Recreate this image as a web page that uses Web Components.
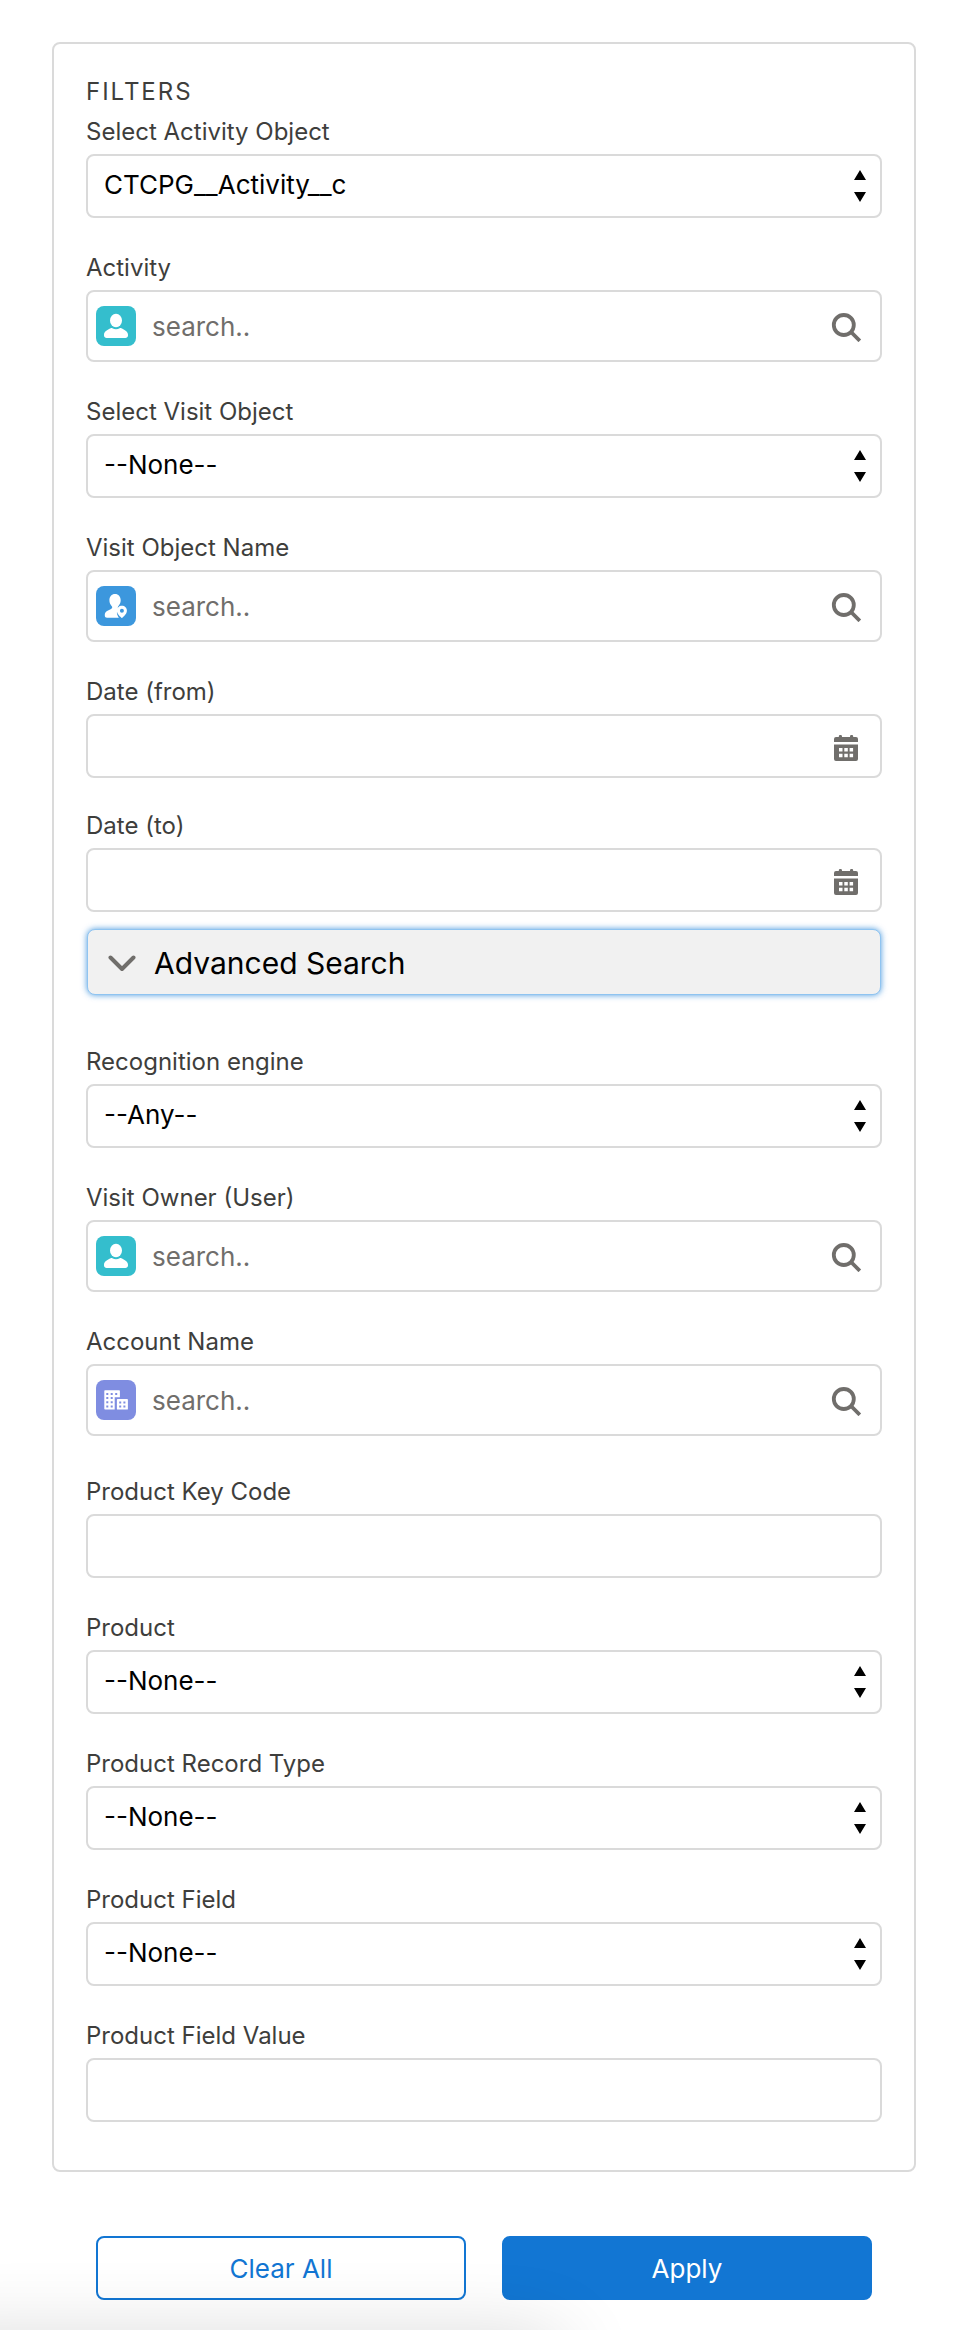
<!DOCTYPE html>
<html lang="en">
<head>
<meta charset="utf-8">
<meta name="viewport" content="width=device-width, initial-scale=1">
<title>Filters</title>
<style>
  body { margin: 0; background: #fff; color: #3e3e3c; font-family: Inter, "Liberation Sans", sans-serif; font-size: 24px; }
</style>
</head>
<body>
<filter-page>
  <filter-card heading="Filters">
    <field-stack>
      <select-field label="Select Activity Object"><option>CTCPG__Activity__c</option></select-field>
      <lookup-field label="Activity" icon="user"></lookup-field>
      <select-field label="Select Visit Object"><option>--None--</option></select-field>
      <lookup-field label="Visit Object Name" icon="visit"></lookup-field>
      <field-stack dense>
        <text-field label="Date (from)" calendar></text-field>
        <text-field label="Date (to)" calendar></text-field>
      </field-stack>
    </field-stack>
    <expand-section heading="Advanced Search">
      <field-stack>
        <select-field label="Recognition engine"><option>--Any--</option></select-field>
        <lookup-field label="Visit Owner (User)" icon="user"></lookup-field>
        <lookup-field label="Account Name" icon="account"></lookup-field>
        <field-stack separated>
          <text-field label="Product Key Code"></text-field>
          <select-field label="Product"><option>--None--</option></select-field>
          <select-field label="Product Record Type"><option>--None--</option></select-field>
          <select-field label="Product Field"><option>--None--</option></select-field>
          <text-field label="Product Field Value"></text-field>
        </field-stack>
      </field-stack>
    </expand-section>
  </filter-card>
  <action-button slot="actions">Clear All</action-button>
  <action-button slot="actions" variant="brand">Apply</action-button>
</filter-page>

<script>
const FIELD_CSS = `
  *, *::before, *::after { box-sizing: border-box; }
  :host { display: block; }
  label { display: block; line-height: 36px; padding-bottom: 4px; font-size: 24px; color: #3e3e3c; }
  .box { display: flex; align-items: center; height: 64px; border: 2px solid #dadada; border-radius: 8px; background: #fff; }
  input, select { flex: 1; min-width: 0; width: 100%; height: 100%; margin: 0; border: 0; outline: 0; background: transparent; font: inherit; font-size: 26px; color: #000; }
  svg { display: block; flex: none; }
`;

const TILES = {
  user: `<rect width="40" height="40" rx="8" fill="#34becd"/>
    <ellipse cx="20" cy="14.5" rx="6" ry="6.8" fill="#fff"/>
    <path fill="#fff" d="M32 28.8v.7c0 1.500-1.200 2.500-2.600 2.500H10.600C9.200 32 8 31 8 29.500v-.7c0-3.200 3.800-5.200 7.300-6.700.4-.1.700-.1 1 .1 2.400 1.500 5 1.500 7.400 0 .3-.2.600-.2 1-.1 3.500 1.500 7.300 3.500 7.300 6.700z"/>`,
  visit: `<rect width="40" height="40" rx="8" fill="#3c97dd"/>
    <path fill="#fff" d="M19 8c3.400 0 5.700 2.700 5.700 6.300 0 2.400-1 4.300-2.300 5.700-.9 1-.7 2.300 0 2.900-1.500 1.700-1.800 3.700-1.200 5.600.4 1.200 1 2.200 1.700 3.200H11c-1.300 0-2.200-.8-2.200-2v-.9c0-3 3.100-4.400 5.800-5.500 1.900-.8 2-2.300 1-3.300-1.300-1.400-2.200-3.300-2.200-5.700C13.400 10.700 15.700 8 19 8z"/>
    <path fill="#fff" fill-rule="evenodd" d="M25.900 19.800c2.800 0 5 2.100 5 4.800 0 3.500-3 5.700-4.500 7.200-.3.300-.7.300-1 0-1.500-1.500-4.500-3.700-4.500-7.200 0-2.700 2.200-4.800 5-4.800zm0 3a2 2 0 1 0 0 4 2 2 0 0 0 0-4z"/>`,
  account: `<rect width="40" height="40" rx="8" fill="#7f8de1"/>
    <path fill="#fff" d="M9 10.200h14.200c.4 0 .7.300.7.700v6.400h-5.200v12.200H9c-.4 0-.7-.3-.7-.7V10.900c0-.4.300-.7.700-.7zM21.600 19h9.600c.4 0 .7.300.7.700v9.200c0 .4-.3.700-.7.700h-9.600c-.4 0-.7-.3-.7-.7v-9.200c0-.4.300-.7.700-.7z"/>
    <path fill="#7f8de1" d="M10.300 13h2v2h-2zm4.400 0h2v2h-2zm4.500 0h2v2h-2zM10.300 17h2v2h-2zm4.400 0h2v2h-2zM10.300 21.200h2v2h-2zm4.400 0h2v2h-2zM10.300 25.400h2v2h-2zm4.400 0h2v2h-2zM23.200 21.400h2v2h-2zm4.200 0h2v2h-2zM23.200 25.400h2v2h-2zm4.200 0h2v2h-2z"/>`
};

function define(name, build) {
  customElements.define(name, class extends HTMLElement {
    connectedCallback() {
      if (this.shadowRoot) return;
      const root = this.attachShadow({ mode: "open" });
      const template = document.createElement("template");
      template.innerHTML = build(this);
      root.append(template.content.cloneNode(true));
      if (name === "select-field") root.querySelector("select").append(...this.querySelectorAll("option"));
      if (name === "expand-section") {
        const button = root.querySelector("button");
        button.addEventListener("click", () => {
          const open = button.getAttribute("aria-expanded") === "true";
          button.setAttribute("aria-expanded", String(!open));
          root.querySelector(".body").hidden = open;
        });
      }
    }
  });
}

define("filter-page", () => `
  <style>
    *, *::before, *::after { box-sizing: border-box; }
    :host { display: block; }
    main { position: relative; overflow: hidden; padding: 42px 52px 30px; }
    .actions { display: grid; grid-template-columns: 1fr 1fr; gap: 36px; margin-top: 64px; padding: 0 44px; }
    /* Soft shadow of the status bar that sits under the window's lower left edge. */
    main::after { content: ""; position: absolute; left: -80px; width: 640px; top: 100%; height: 80px; border-radius: 8px; box-shadow: 0 8px 80px rgba(0, 0, 0, 0.16); pointer-events: none; }
  </style>
  <main><slot></slot><div class="actions"><slot name="actions"></slot></div></main>`);

define("filter-card", el => `
  <style>
    :host { display: block; border: 2px solid #dadada; border-radius: 8px; padding: 30px 32px 48px; }
    h2 { margin: 0 0 4px; font-size: 24px; line-height: 36px; font-weight: 400; letter-spacing: 2px; text-transform: uppercase; }
  </style>
  <h2>${el.getAttribute("heading")}</h2><slot></slot>`);

define("field-stack", () => `
  <style>
    :host { display: flex; flex-direction: column; gap: 32px; }
    :host([dense]) { gap: 30px; }
    :host([separated]) { padding-top: 6px; }
  </style><slot></slot>`);

define("select-field", el => `
  <style>${FIELD_CSS}
    .box { display: grid; grid-template-columns: 1fr auto; }
    select { appearance: none; grid-area: 1 / 1 / 2 / 3; padding: 0 48px 4px 16px; }
    svg { grid-area: 1 / 2; margin-right: 14px; pointer-events: none; }
  </style>
  <label for="control">${el.getAttribute("label")}</label>
  <div class="box"><select id="control"></select>
    <svg width="12" height="32" viewBox="0 0 12 32" aria-hidden="true"><path d="M6 0l6 10H0zM0 22h12L6 32z"/></svg>
  </div>`);

define("lookup-field", el => `
  <style>${FIELD_CSS}
    .box { height: 72px; padding: 0 18px 0 8px; }
    input { padding: 0 16px; }
    input::placeholder { color: #706e6b; opacity: 1; }
  </style>
  <label for="control">${el.getAttribute("label")}</label>
  <div class="box">
    <svg width="40" height="40" viewBox="0 0 40 40" aria-hidden="true">${TILES[el.getAttribute("icon")]}</svg>
    <input id="control" type="text" placeholder="search..">
    <svg width="32" height="32" viewBox="0 0 32 32" fill="none" stroke="#706e6b" aria-hidden="true"><circle cx="13.800" cy="15" r="10" stroke-width="3.800"/><path d="M20.500 21.500l9.300 9.300" stroke-width="3.800"/></svg>
  </div>`);

define("text-field", el => `
  <style>${FIELD_CSS}
    .box { padding-right: 22px; }
    input { padding: 0 16px; }
    svg { margin-top: 4px; }
  </style>
  <label for="control">${el.getAttribute("label")}</label>
  <div class="box"><input id="control" type="text">
    ${el.hasAttribute("calendar") ? `<svg width="24" height="26" viewBox="0 0 24 26" fill="#706e6b" aria-hidden="true">
      <path d="M2 2h2.800V1.500a1.600 1.600 0 0 1 3.200 0V2h8v-.5a1.600 1.600 0 0 1 3.200 0V2H22a2 2 0 0 1 2 2v3H0V4a2 2 0 0 1 2-2z"/>
      <path fill-rule="evenodd" d="M0 9.500h24V24a2 2 0 0 1-2 2H2a2 2 0 0 1-2-2zM5 13v3.500h3.500V13zm5.300 0v3.500h3.500V13zm5.300 0v3.500h3.500V13zM5 18.800v3.500h3.500v-3.500zm5.300 0v3.500h3.500v-3.500zm5.300 0v3.500h3.500v-3.500z"/>
    </svg>` : ""}
  </div>`);

define("expand-section", el => `
  <style>
    *, *::before, *::after { box-sizing: border-box; }
    :host { display: block; margin-top: 16px; }
    h3 { margin: 0; padding: 1px; font: inherit; }
    button { display: flex; align-items: center; gap: 18px; width: 100%; height: 66px; margin: 0; padding: 2px 20px 0; border: 1px solid #8fc4f1; border-radius: 8px; background: #f1f1f1; box-shadow: 0 0 6px rgba(0, 112, 210, 0.7); font: inherit; font-size: 30px; line-height: 40px; color: #000; text-align: left; }
    .body { padding-top: 48px; }
    [aria-expanded="false"] svg { rotate: -90deg; }
  </style>
  <h3><button type="button" aria-expanded="true" aria-controls="body">
    <svg width="28" height="28" viewBox="0 0 28 28" fill="none" stroke="#706e6b" stroke-width="4" stroke-linecap="round" stroke-linejoin="round" aria-hidden="true"><path d="M2.500 8.500L14 20 25.500 8.500"/></svg>
    <span>${el.getAttribute("heading")}</span>
  </button></h3>
  <div class="body" id="body"><slot></slot></div>`);

define("action-button", () => `
  <style>
    :host { display: block; }
    button { box-sizing: border-box; display: block; width: 100%; height: 64px; margin: 0; padding: 0 16px; border: 2px solid #1276d3; border-radius: 8px; background: #fff; color: #1276d3; font: inherit; font-size: 26px; }
    :host([variant="brand"]) button { background: #1276d3; color: #fff; }
  </style>
  <button type="button"><slot></slot></button>`);
</script>
</body>
</html>
